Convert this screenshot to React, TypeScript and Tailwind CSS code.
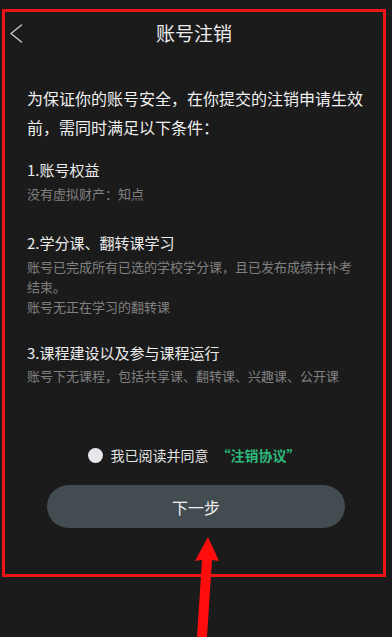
const font = { fontFamily: '"Noto Sans CJK SC", "Noto Sans", sans-serif' }

export default function App() {
  return (
    <div
      className="relative w-[392px] h-[637px] overflow-hidden bg-[#1b1b1b] pt-[9px] pl-[2px]"
      style={font}
    >
      <div className="w-[384px] h-[568px] border-[3px] border-[#ee1518] flex flex-col">
        {/* header */}
        <div className="relative h-[42px] flex items-center justify-center">
          <svg
            className="absolute left-[4px] top-[12px]"
            width="14"
            height="20"
            viewBox="0 0 14 20"
            fill="none"
          >
            <polyline
              points="12.5,1 2,9.5 12.5,18"
              stroke="#c8c8c8"
              strokeWidth="1.4"
              strokeLinecap="round"
              strokeLinejoin="round"
            />
          </svg>
          <span className="text-[19px] text-[#ececec]">账号注销</span>
        </div>

        <div className="px-[22px] flex flex-col">
          <p className="mt-[30px] -mr-[14px] text-[16px] leading-[29px] text-[#f0f0f0]">
            为保证你的账号安全，在你提交的注销申请生效前，需同时满足以下条件：
          </p>

          <div className="mt-[17px] text-[15px] leading-[22px] text-[#ececec]">1.账号权益</div>
          <div className="mt-[3px] text-[13px] leading-[20px] text-[#808080]">
            没有虚拟财产：知点
          </div>

          <div className="mt-[28px] text-[15px] leading-[22px] text-[#ececec]">
            2.学分课、翻转课学习
          </div>
          <div className="mt-[3px] text-[13px] leading-[20px] text-[#808080]">
            <p>账号已完成所有已选的学校学分课，且已发布成绩并补考结束。</p>
            <p>账号无正在学习的翻转课</p>
          </div>

          <div className="mt-[25px] text-[15px] leading-[22px] text-[#ececec]">
            3.课程建设以及参与课程运行
          </div>
          <div className="mt-[2px] text-[13px] leading-[20px] text-[#808080]">
            账号下无课程，包括共享课、翻转课、兴趣课、公开课
          </div>

          <div className="mt-[59px] h-[20px] flex items-center justify-center gap-[8px]">
            <span className="w-[15px] h-[15px] rounded-full bg-[#e6e7ea]" />
            <span className="text-[14px] text-[#e2e2e2]">
              我已阅读并同意
              <span className="ml-[8px] text-[#2db87a] font-bold">“注销协议”</span>
            </span>
          </div>

          <button className="mt-[20px] ml-[20px] w-[298px] h-[43px] rounded-full bg-[#434c51] text-[16px] text-[#f0f0f0]">
            下一步
          </button>
        </div>
      </div>

      {/* annotation arrow */}
      <svg
        className="absolute left-0 top-0"
        width="392"
        height="637"
        viewBox="0 0 392 637"
      >
        <polygon
          points="208,537 219,561 212,560 207,637 197,637 202,560 195,561"
          fill="#ff0d0d"
        />
      </svg>
    </div>
  )
}
